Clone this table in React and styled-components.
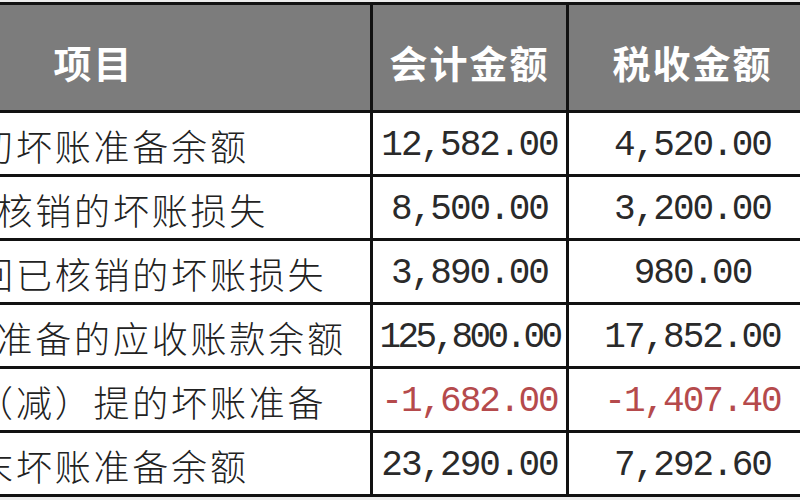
import React from "react";
import styled, { createGlobalStyle } from "styled-components";

const GlobalStyle = createGlobalStyle`
  html, body {
    margin: 0;
    padding: 0;
    background: #ececec;
  }
`;

const Viewport = styled.div`
  width: 800px;
  height: 500px;
  overflow: hidden;
  background: #ececec;
  padding-top: 2px;
  box-sizing: border-box;
`;

const Table = styled.table`
  border-collapse: collapse;
  table-layout: fixed;
  width: 1002px;
  margin-left: -186px;
  background: #fff;
  border: 3px solid #111;
`;

const HeadCell = styled.th`
  height: 97px;
  padding: 8px 0 0;
  background: #7c7c7c;
  color: #fff;
  border: 3px solid #111;
  font-family: "Noto Sans CJK SC", sans-serif;
  font-size: 38px;
  font-weight: 700;
  letter-spacing: 2px;
  text-align: center;
  vertical-align: middle;
`;

const LabelCell = styled.td`
  height: 64px;
  padding: 2px 0 0;
  border: 3px solid #111;
  font-family: "Noto Sans CJK SC", sans-serif;
  font-size: 36px;
  font-weight: 300;
  letter-spacing: 2.8px;
  color: #222;
  text-align: center;
  white-space: nowrap;
  overflow: hidden;
  box-sizing: border-box;
`;

const AmountCell = styled.td`
  height: 64px;
  padding: 4px 0 0;
  border: 3px solid #111;
  font-family: "Liberation Mono", monospace;
  font-size: 36px;
  line-height: 1;
  letter-spacing: ${({ $long }) => ($long ? "-3.6px" : "-2px")};
  color: ${({ $negative }) => ($negative ? "#b54a4c" : "#2a2a2a")};
  text-align: center;
  white-space: nowrap;
  overflow: hidden;
  box-sizing: border-box;
`;

const rows = [
  { label: "期初坏账准备余额", book: "12,582.00", tax: "4,520.00" },
  { label: "本期核销的坏账损失", book: "8,500.00", tax: "3,200.00" },
  { label: "本期收回已核销的坏账损失", book: "3,890.00", tax: "980.00" },
  { label: "计提坏账准备的应收账款余额", book: "125,800.00", tax: "17,852.00" },
  { label: "本期补（减）提的坏账准备", book: "-1,682.00", tax: "-1,407.40" },
  { label: "期末坏账准备余额", book: "23,290.00", tax: "7,292.60" },
];

function Amount({ value }) {
  return (
    <AmountCell $negative={value.startsWith("-")} $long={value.length > 9}>
      {value}
    </AmountCell>
  );
}

export default function App() {
  return (
    <>
      <GlobalStyle />
      <Viewport>
        <Table>
          <colgroup>
            <col style={{ width: 556 }} />
            <col style={{ width: 196 }} />
            <col style={{ width: 250 }} />
          </colgroup>
          <thead>
            <tr>
              <HeadCell>项目</HeadCell>
              <HeadCell>会计金额</HeadCell>
              <HeadCell>税收金额</HeadCell>
            </tr>
          </thead>
          <tbody>
            {rows.map((r) => (
              <tr key={r.label}>
                <LabelCell>{r.label}</LabelCell>
                <Amount value={r.book} />
                <Amount value={r.tax} />
              </tr>
            ))}
          </tbody>
        </Table>
      </Viewport>
    </>
  );
}
